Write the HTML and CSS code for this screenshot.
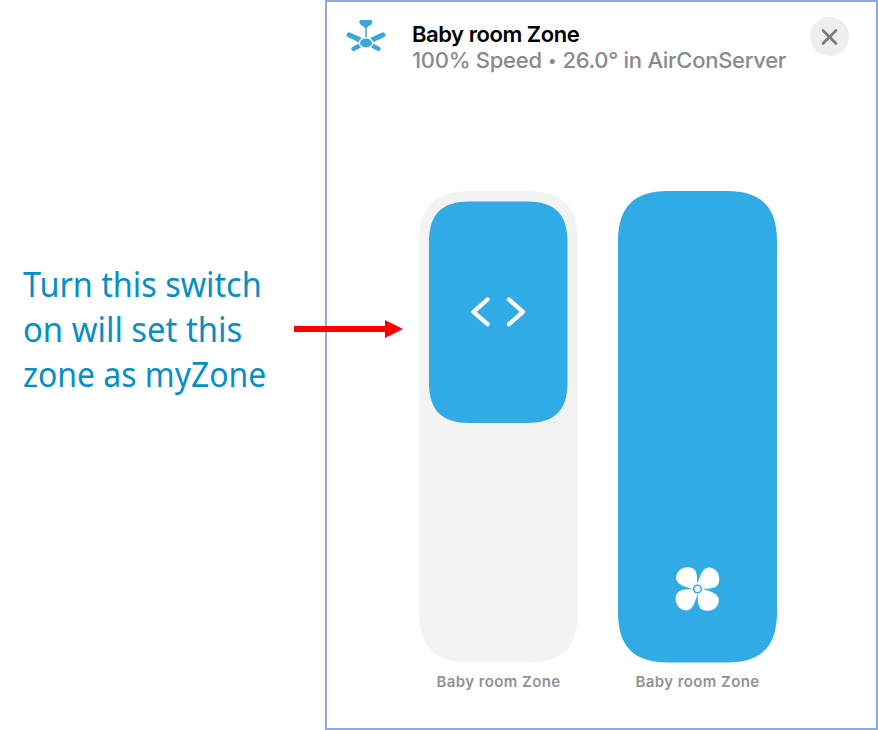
FILE: index.html
```html
<!DOCTYPE html>
<html lang="en">
<head>
<meta charset="utf-8">
<title>Baby room Zone</title>
<link rel="stylesheet" href="styles.css">
</head>
<body>
<main class="page">
  <aside class="note">
    <p class="note-text"><span class="l1">Turn this switch</span><br><span class="l2">on will set this</span><br><span class="l3">zone as myZone</span></p>
    <svg class="arrow" width="110" height="20" viewBox="0 0 110 20"><path d="M0 7h91V1l18 9L91 19v-6H0z" fill="#f00"/></svg>
  </aside>
  <section class="card">
    <header class="head">
      <svg class="ceiling" width="42" height="34" viewBox="0 0 42 34" fill="#35a9df">
        <path d="M13.300 1.500Q13.300 0 14.800 0h10q1.500 0 1.500 1.500c0 2.600-1.800 4-4 4.800l-1 1.200h-3l-1-1.200C15.100 5.500 13.300 4.100 13.300 1.500z"/>
        <path d="M19 7h2v11.500h-2z" opacity=".75"/>
        <path d="M3.200 15L13.500 19.700M36.800 15L26.500 19.700" fill="none" stroke="#35a9df" stroke-width="5.200" stroke-linecap="round"/>
        <path d="M7.500 28.700L14 25.500M32.500 28.700L26 25.500" fill="none" stroke="#35a9df" stroke-width="4.300" stroke-linecap="round"/>
        <ellipse cx="20" cy="23" rx="6.700" ry="5.200" stroke="#fff" stroke-width="1.400"/>
      </svg>
      <div class="titles">
        <h1>Baby room Zone</h1>
        <p>100% Speed <span class="dot">•</span> 26.0° in AirConServer</p>
      </div>
      <button class="close" aria-label="Close">
        <svg width="16" height="16" viewBox="0 0 16 16"><path d="M1.500 1.500l13 13M14.500 1.500l-13 13" stroke="#7b7b7d" stroke-width="2.700" stroke-linecap="round"/></svg>
      </button>
    </header>
    <div class="controls">
      <figure class="control">
        <svg width="159" height="472" viewBox="0 0 159 472">
          <path fill="#f3f3f3" d="M0 50C0 16 16 0 50 0H109C143 0 159 16 159 50V421.500C159 455.500 143 471.500 109 471.500H50C16 471.500 0 455.500 0 421.500z"/>
          <path fill="#30abe5" d="M10 51.500C10 23 22.500 10.500 51 10.500H107.500C136 10.500 148.500 23 148.500 51.500V191C148.500 219.500 136 232 107.500 232H51C22.500 232 10 219.500 10 191z"/>
          <path d="M68.500 108.500L54.500 120.800l14 12.400M90 108.500l14 12.300-14 12.400" fill="none" stroke="#fff" stroke-width="4.300" stroke-linecap="round" stroke-linejoin="round"/>
        </svg>
        <figcaption>Baby room Zone</figcaption>
      </figure>
      <figure class="control">
        <svg width="159" height="472" viewBox="0 0 159 472">
          <path fill="#30abe5" d="M0 50C0 16 16 0 50 0H109C143 0 159 16 159 50V421.500C159 455.500 143 471.500 109 471.500H50C16 471.500 0 455.500 0 421.500z"/>
          <g transform="translate(79.500 398)" fill="#fff">
            <path id="blade" d="M-.7-4C.2-8-.1-14-2-18C-4-22-10.500-22.800-15.500-20.500C-20.500-18-22.800-12-20.500-8C-17.500-3.200-11-2-4 .4z"/>
            <use href="#blade" transform="rotate(90)"/>
            <use href="#blade" transform="rotate(180)"/>
            <use href="#blade" transform="rotate(270)"/>
            <circle r="5.800"/>
            <circle r="3.800" fill="none" stroke="#30abe5" stroke-width="1.600"/>
          </g>
        </svg>
        <figcaption>Baby room Zone</figcaption>
      </figure>
    </div>
  </section>
</main>
</body>
</html>
```
FILE: styles.css
```css
* { box-sizing: border-box; }
body { margin: 0; background: #fff; }
h1, p, figure { margin: 0; }
svg { display: block; }
.page { display: flex; width: 878px; height: 730px; }
.note { position: relative; width: 325px; flex: none; padding: 262px 0 0 23px; }
.note-text {
  font: 34px/45px "Noto Sans", sans-serif;
  color: #0490c4;
  white-space: nowrap;
}
.note-text span { display: inline-block; transform-origin: 0 50%; }
.l1 { transform: scaleX(.952); }
.l2 { transform: scaleX(.965); }
.l3 { transform: scaleX(.939); }
.arrow { position: absolute; left: 294px; top: 319px; z-index: 1; }
.card { width: 553px; height: 730px; border: 2px solid #8faadc; background: #fff; }
.head { display: flex; height: 189px; padding: 15px 27px 0 19px; font-family: Inter, sans-serif; }
.ceiling { margin-top: 3px; flex: none; }
.titles { margin: 4px 0 0 24px; flex: 1; white-space: nowrap; }
h1 { font-size: 22px; line-height: 26px; font-weight: 600; color: #000; letter-spacing: -.45px; }
.titles p { font-size: 22px; line-height: 27px; font-weight: 500; color: #8a8a8d; letter-spacing: -.28px; }
.dot { display: inline-block; width: 9.500px; font-size: 16px; line-height: 20px; text-align: center; transform: translateY(-2px); }
.close {
  width: 39px; height: 39px; padding: 0; border: 0; border-radius: 50%;
  background: #eee; display: grid; place-items: center; flex: none;
}
.close svg { transform: translateX(-.5px); }
.controls { display: flex; gap: 40px; padding-left: 92px; }
.control { width: 159px; }
figcaption {
  margin-top: 9px; text-align: center; white-space: nowrap;
  font: 600 15px/20px Inter, sans-serif; color: #929294; letter-spacing: .42px;
}
```
